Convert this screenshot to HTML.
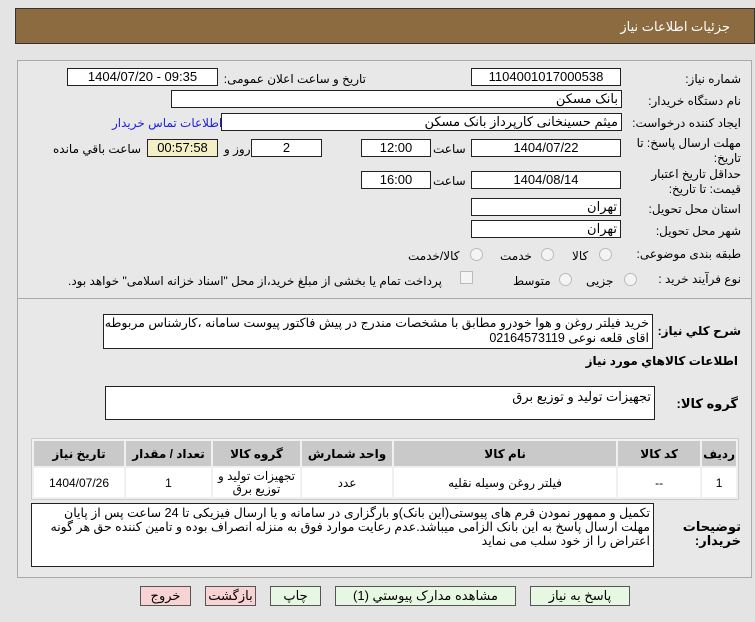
<!DOCTYPE html>
<html><head><meta charset="utf-8"><style>
body{margin:0;width:755px;height:622px;background:#e4e4e4;position:relative;overflow:hidden;font-family:"Liberation Sans","DejaVu Sans",sans-serif;font-size:12px;color:#000}
.a{position:absolute}
.hdr{left:15px;top:8px;width:738px;height:34px;background:#8c6b40;border:1px solid #333}
.hdr span{position:absolute;right:24px;top:10px;color:#fff;font-size:13px}
.panel{left:17px;top:60px;width:733px;height:516px;border:1px solid #aaa;background:#e8e8e8}
.in{position:absolute;background:#fff;border:1px solid #222;height:16px;line-height:16px;text-align:center;font-size:13px;box-sizing:content-box}
.r{text-align:right;padding-right:3px}
.l{position:absolute;direction:rtl;white-space:nowrap}
.rad{position:absolute;width:11px;height:11px;border-radius:50%;border:1px solid #bbb;background:#f4f4f4}
table{border-collapse:separate;border-spacing:2px;position:absolute;left:31px;top:438px;width:708px;background:#f0f0f0;border:1px solid #ccc}
td,th{text-align:center;font-size:12px}
th{background:#c9c9c9;height:23px;font-weight:bold}
td{background:#fff;height:27px}
.btn{position:absolute;top:586px;height:18px;border:1px solid #555;text-align:center;line-height:18px;font-size:13px}
.g{background:#e6f8e2}.p{background:#f8d3d3}
.ta{letter-spacing:-0.3px;font-size:12.5px}
</style></head><body>
<div class="a hdr"><span>جزئیات اطلاعات نیاز</span></div>
<div class="a panel"></div>
<div class="a" style="left:17px;top:298px;width:735px;border-top:1px solid #aaa"></div>

<div class="l" style="right:14px;top:72px">شماره نیاز:</div>
<div class="in" style="left:471px;top:68px;width:148px">1104001017000538</div>
<div class="l" style="right:389px;top:72px">تاریخ و ساعت اعلان عمومی:</div>
<div class="in" style="left:67px;top:68px;width:149px">1404/07/20 - 09:35</div>
<div class="l" style="right:14px;top:94px">نام دستگاه خریدار:</div>
<div class="in r" style="left:171px;top:90px;width:446px">بانک مسکن</div>
<div class="l" style="right:14px;top:116px">ایجاد کننده درخواست:</div>
<div class="in r" style="left:221px;top:113px;width:396px">میثم حسینخانی کارپرداز بانک مسکن</div>
<div class="l" style="left:112px;top:116px;color:#2222dd">اطلاعات تماس خریدار</div>
<div class="l" style="right:14px;top:136px">مهلت ارسال پاسخ: تا</div>
<div class="l" style="right:14px;top:151px">تاریخ:</div>
<div class="in" style="left:471px;top:139px;width:148px">1404/07/22</div>
<div class="l" style="left:433px;top:142px">ساعت</div>
<div class="in" style="left:361px;top:139px;width:68px">12:00</div>
<div class="in" style="left:251px;top:139px;width:69px">2</div>
<div class="l" style="left:224px;top:142px">روز و</div>
<div class="in" style="left:147px;top:139px;width:69px;background:#f3f0c8">00:57:58</div>
<div class="l" style="left:53px;top:142px">ساعت باقي مانده</div>
<div class="l" style="right:14px;top:167px">حداقل تاریخ اعتبار</div>
<div class="l" style="right:14px;top:182px">قیمت: تا تاریخ:</div>
<div class="in" style="left:471px;top:171px;width:148px">1404/08/14</div>
<div class="l" style="left:433px;top:174px">ساعت</div>
<div class="in" style="left:361px;top:171px;width:68px">16:00</div>
<div class="l" style="right:14px;top:202px">استان محل تحویل:</div>
<div class="in r" style="left:471px;top:198px;width:145px">تهران</div>
<div class="l" style="right:14px;top:224px">شهر محل تحویل:</div>
<div class="in r" style="left:471px;top:220px;width:145px">تهران</div>
<div class="l" style="right:14px;top:247px">طبقه بندی موضوعی:</div>
<div class="rad" style="left:599px;top:248px"></div><div class="l" style="left:572px;top:249px">کالا</div>
<div class="rad" style="left:541px;top:248px"></div><div class="l" style="left:500px;top:249px">خدمت</div>
<div class="rad" style="left:470px;top:248px"></div><div class="l" style="left:408px;top:249px">کالا/خدمت</div>
<div class="l" style="right:14px;top:272px">نوع فرآیند خرید :</div>
<div class="rad" style="left:624px;top:273px"></div><div class="l" style="left:586px;top:274px">جزیی</div>
<div class="rad" style="left:559px;top:273px"></div><div class="l" style="left:513px;top:274px">متوسط</div>
<div class="a" style="left:460px;top:271px;width:11px;height:11px;border:1px solid #bbb;background:#f4f4f4"></div>
<div class="l" style="left:68px;top:274px">پرداخت تمام یا بخشی از مبلغ خرید،از محل "اسناد خزانه اسلامی" خواهد بود.</div>

<div class="l" style="right:14px;top:324px;font-weight:bold">شرح کلي نیاز:</div>
<div class="in r ta" style="left:103px;top:314px;width:545px;height:32px;line-height:15px;text-align:right;padding-top:1px">خرید فیلتر روغن و هوا خودرو مطابق با مشخصات مندرج در پیش فاکتور پیوست سامانه ،کارشناس مربوطه اقای قلعه نوعی 02164573119</div>
<div class="l" style="right:17px;top:354px;font-weight:bold">اطلاعات کالاهاي مورد نیاز</div>
<div class="l" style="right:17px;top:396px;font-weight:bold;font-size:13px">گروه کالا:</div>
<div class="in r" style="left:105px;top:386px;width:545px;height:32px;text-align:right;line-height:20px">تجهیزات تولید و توزیع برق</div>

<table dir="rtl"><tr><th style="width:26px">ردیف</th><th style="width:80px">کد کالا</th><th>نام کالا</th><th style="width:88px">واحد شمارش</th><th style="width:85px">گروه کالا</th><th style="width:83px">تعداد / مقدار</th><th style="width:88px">تاریخ نیاز</th></tr>
<tr><td>1</td><td>--</td><td>فیلتر روغن وسیله نقلیه</td><td>عدد</td><td style="line-height:13px">تجهیزات تولید و توزیع برق</td><td>1</td><td>1404/07/26</td></tr></table>

<div class="l" style="right:14px;top:520px;font-weight:bold;font-size:13px;line-height:14px;text-align:right">توضیحات<br>خریدار:</div>
<div class="in r ta" style="left:31px;top:503px;width:618px;height:60px;text-align:right;line-height:14px;padding-top:2px">تکمیل و ممهور نمودن فرم های پیوستی(این بانک)و بارگزاری در سامانه و یا ارسال فیزیکی تا 24 ساعت پس از پایان مهلت ارسال پاسخ به این بانک الزامی میباشد.عدم رعایت موارد فوق به منزله انصراف بوده و تامین کننده حق هر گونه اعتراض را از خود سلب می نماید</div>

<div class="btn p" style="left:140px;width:49px">خروج</div>
<div class="btn p" style="left:205px;width:49px">بازگشت</div>
<div class="btn g" style="left:270px;width:49px">چاپ</div>
<div class="btn g" style="left:335px;width:179px">مشاهده مدارک پیوستي (1)</div>
<div class="btn g" style="left:530px;width:98px">پاسخ به نیاز</div>
</body></html>
